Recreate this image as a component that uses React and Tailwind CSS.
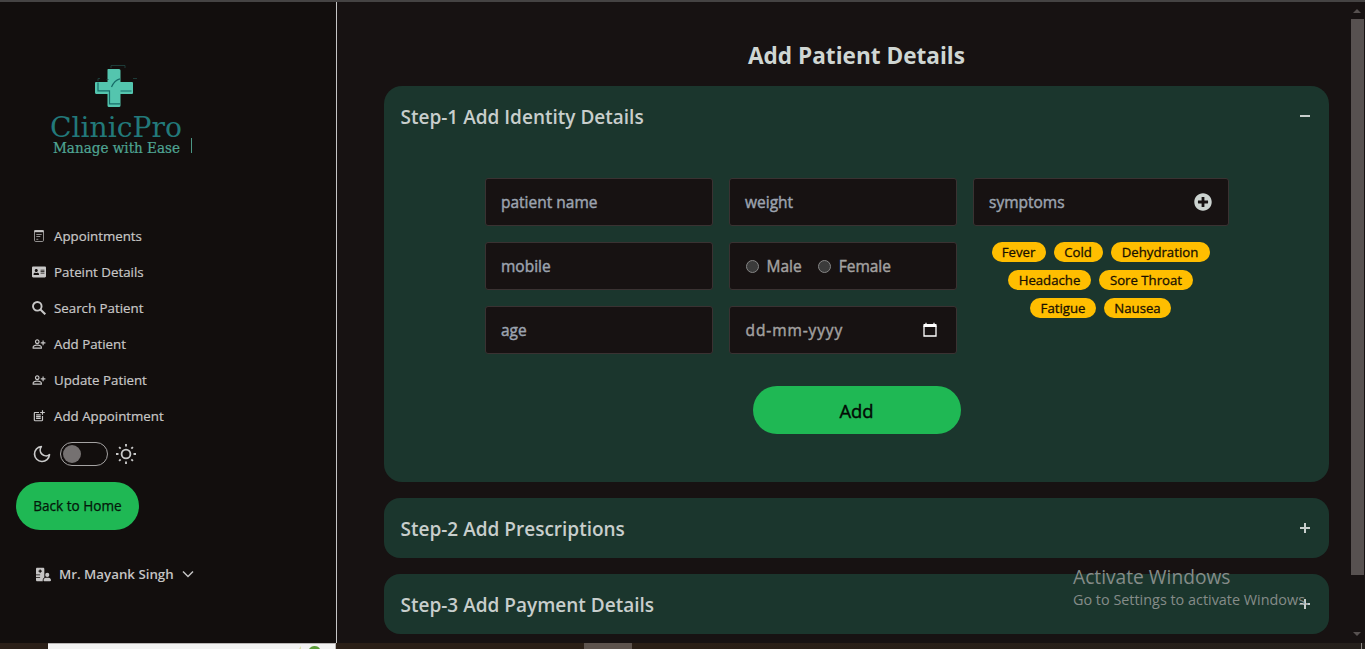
import { FaAddressCard, FaPlusCircle } from "react-icons/fa";
import { FaHospitalUser } from "react-icons/fa6";
import { MdOutlinePersonAddAlt, MdPostAdd } from "react-icons/md";

function NoteIcon() {
  return (
    <svg viewBox="0 0 14 14" className="size-[14px]" fill="none" stroke="currentColor">
      <rect x="2.500" y="1.500" width="9" height="11" rx="1.200" strokeWidth="0.700" />
      <path d="M2.300 2.200h9.400" strokeWidth="2" />
      <path d="M4.300 5.500h5.400M4.300 7.500h4M4.300 10.300h2" strokeWidth="0.700" />
    </svg>
  );
}

function SearchIcon() {
  return (
    <svg viewBox="0 0 14 14" className="size-[14px]" fill="none" stroke="currentColor" strokeWidth="1.900">
      <circle cx="5.300" cy="5.300" r="4.300" />
      <path d="M8.400 8.400l4.900 4.900" strokeWidth="2.100" />
    </svg>
  );
}

function Logo() {
  return (
    <svg viewBox="0 0 160 110" className="h-[110px] w-[160px]">
      <path
        d="M68 14h11q1.500 0 1.500 1.500V27h11.500q1 0 1 1v10q0 1-1 1H80.500v11.500q0 1.500-1.500 1.500H69q-1.500 0-1.500-1.500V39H56.500q-1.500 0-1.500-1.500V28q0-1 1-1h11.500V15q0-1 .500-1z"
        fill="#54c5ae"
      />
      <path d="M58 27.500v8.300h11.500v13h10.500M71.500 32q3-7 8.500-8.200M80.500 36h11" fill="none" stroke="#176c68" strokeWidth="1.200" />
      <path d="M71 13v-2.500h14v2.500M93 23.500h4M58 26v-2.500h2M66.500 24.500h2" fill="none" stroke="#214744" strokeWidth="0.800" />
      <text x="10" y="82" textLength="132" lengthAdjust="spacingAndGlyphs" fontSize="27" fill="#22797a" fontFamily="'DejaVu Serif Condensed', 'DejaVu Serif', serif">ClinicPro</text>
      <text x="13" y="97.500" textLength="127" lengthAdjust="spacingAndGlyphs" fontSize="14" fill="#4fa593" stroke="#4fa593" strokeWidth="0.200" fontFamily="'DejaVu Serif Condensed', 'DejaVu Serif', serif">Manage with Ease</text>
      <path d="M151.500 83v15" stroke="#4c9684" strokeWidth="1" />
    </svg>
  );
}

const links = [
  { icon: <NoteIcon />, label: "Appointments" },
  { icon: <FaAddressCard className="size-[14px]" />, label: "Pateint Details" },
  { icon: <SearchIcon />, label: "Search Patient" },
  { icon: <MdOutlinePersonAddAlt className="size-[14px]" />, label: "Add Patient" },
  { icon: <MdOutlinePersonAddAlt className="size-[14px]" />, label: "Update Patient" },
  { icon: <MdPostAdd className="size-[14px]" />, label: "Add Appointment" },
];

function Sidebar() {
  return (
    <aside className="flex w-[337px] shrink-0 flex-col border-r border-[#c6c6c6] bg-[#120e0d]">
      <div className="pt-[53px] pl-10">
        <Logo />
      </div>
      <nav className="mt-[53px] flex flex-col">
        {links.map((l) => (
          <a key={l.label} className="flex h-9 items-center pl-[30px] text-[13.3px] text-[#c8c7c7] [-webkit-text-stroke:0.2px]">
            <span className="mr-[6px] flex w-[18px] justify-center">{l.icon}</span>
            <span className="pt-[2px]">{l.label}</span>
          </a>
        ))}
      </nav>
      <div className="mt-2 flex h-6 items-center gap-2 pl-8 text-[#cacaca]">
        <svg viewBox="0 0 24 24" className="size-5" fill="none" stroke="currentColor" strokeWidth="2" strokeLinecap="round" strokeLinejoin="round">
          <path d="M21 12.790A9 9 0 1 1 11.210 3 7 7 0 0 0 21 12.790z" />
        </svg>
        <span className="flex h-6 w-12 items-center rounded-full border border-[#a5a3a3] pl-[2px]">
          <span className="size-[18px] rounded-full bg-[#757171]" />
        </span>
        <svg viewBox="0 0 24 24" className="size-5" fill="none" stroke="currentColor" strokeWidth="2.200">
          <circle cx="12" cy="12" r="5.300" />
          <path d="M12 0v3M12 21v3M3.700 3.700l1.900 1.900M18.400 18.400l1.900 1.900M0 12h3M21 12h3M3.700 20.300l1.900-1.900M18.400 5.600l1.900-1.900" />
        </svg>
      </div>
      <button className="mt-4 ml-4 h-12 w-[123px] rounded-full bg-[#1fb854] text-[13.6px] text-[#04170a] [-webkit-text-stroke:0.25px]">Back to Home</button>
      <div className="mt-[34px] flex h-5 items-center pl-9 text-[13.3px] font-semibold text-[#c5c4c4]">
        <FaHospitalUser className="mr-2 size-[15px]" />
        <span className="pt-[2px]">Mr. Mayank Singh</span>
        <svg viewBox="0 0 12 8" className="ml-2 h-2 w-3" fill="none" stroke="currentColor" strokeWidth="1.500">
          <path d="M1 1.500l5 5 5-5" />
        </svg>
      </div>
    </aside>
  );
}

const box = "flex h-12 items-center rounded-[3px] border border-[#3a3232] bg-[#171212] px-4 text-[15.5px] text-[#9ca3af] [-webkit-text-stroke:0.45px]";

function Field({ label }) {
  return (
    <div className={`${box} pl-[15.500px]`}>
      <span className="pt-[2px]">{label}</span>
    </div>
  );
}

function Radio({ label }) {
  return (
    <span className="flex items-center gap-2 text-[#a3a1a0]">
      <span className="size-[13px] rounded-full border border-[#858585] bg-[#3b3b3b]" />
      <span className="pt-[2px]">{label}</span>
    </span>
  );
}

function Step({ title, sign }) {
  return (
    <div className="flex h-[60px] items-center justify-between pr-4 pl-[16.500px] text-[19px] font-semibold text-[#c8cecc]">
      <h2 className="pt-[2px]">{title}</h2>
      <svg viewBox="0 0 12 12" className="mr-[2px] size-3" stroke="currentColor" strokeWidth="2">
        <path d={sign === "+" ? "M1 6h10M6 1v10" : "M1 6h10"} />
      </svg>
    </div>
  );
}

function Badge({ children, width }) {
  return <span className={`flex h-5 items-center justify-center rounded-full bg-[#ffbe00] pt-px text-[13.2px] text-[#191000] [-webkit-text-stroke:0.3px] ${width}`}>{children}</span>;
}

function Main() {
  return (
    <main className="relative flex min-w-0 grow flex-col overflow-hidden bg-[#171212] pr-[21px] pl-[47px]">
      <h1 className="mt-[38px] flex h-8 shrink-0 items-center justify-center text-[22.6px] font-bold text-[#cfd6d3]">Add Patient Details</h1>
      <section className="mt-[14px] h-[396px] shrink-0 rounded-[18px] bg-[#1b362d]">
        <Step title="Step-1 Add Identity Details" sign="-" />
        <div className="mx-auto mt-8 flex w-[744px] gap-4">
          <div className="flex w-[228px] flex-col gap-4">
            <Field label="patient name" />
            <Field label="mobile" />
            <Field label="age" />
          </div>
          <div className="flex w-[228px] flex-col gap-4">
            <Field label="weight" />
            <div className={`${box} gap-4`}>
              <Radio label="Male" />
              <Radio label="Female" />
            </div>
            <div className={`${box} justify-between`}>
              <span className="pt-[2px] tracking-[0.9px] text-[#a3a1a0]">dd-mm-yyyy</span>
              <svg viewBox="0 0 14 16" className="mr-[3px] h-4 w-[14px]" fill="none" stroke="#fff">
                <path d="M1 3.500v10.500h12V3.500" strokeWidth="1.300" />
                <path d="M0.500 3.500h13" strokeWidth="3" />
                <path d="M3 0.800v2M11 0.800v2" strokeWidth="1.200" />
              </svg>
            </div>
          </div>
          <div className="flex w-64 flex-col gap-2">
            <div className={`${box} mb-2 justify-between pl-[15.500px]`}>
              <span className="pt-[2px]">symptoms</span>
              <FaPlusCircle className="size-[18px] text-[#ccd3d0]" />
            </div>
            <div className="flex justify-center gap-2">
              <Badge width="w-[54px]">Fever</Badge>
              <Badge width="w-[49px]">Cold</Badge>
              <Badge width="w-[99px]">Dehydration</Badge>
            </div>
            <div className="flex justify-center gap-2">
              <Badge width="w-[83px]">Headache</Badge>
              <Badge width="w-[94px]">Sore Throat</Badge>
            </div>
            <div className="flex justify-center gap-2">
              <Badge width="w-[66px]">Fatigue</Badge>
              <Badge width="w-[67px]">Nausea</Badge>
            </div>
          </div>
        </div>
        <button className="mx-auto mt-8 block h-12 w-52 rounded-full bg-[#1fb854] pt-[2px] text-[18.4px] text-[#020a04] [-webkit-text-stroke:0.4px]">Add</button>
      </section>
      <section className="mt-4 shrink-0 rounded-2xl bg-[#1b362d]">
        <Step title="Step-2 Add Prescriptions" sign="+" />
      </section>
      <section className="mt-4 shrink-0 rounded-2xl bg-[#1b362d]">
        <Step title="Step-3 Add Payment Details" sign="+" />
      </section>
      <div className="absolute top-[562px] left-[736px] whitespace-nowrap text-[#858c89]">
        <p className="text-[19.2px] leading-[26px]">Activate Windows</p>
        <p className="text-[14.4px] leading-5">Go to Settings to activate Windows.</p>
      </div>
    </main>
  );
}

function Scrollbar() {
  return (
    <div className="flex w-[15px] shrink-0 flex-col items-center bg-[#171212] pr-px text-[#575150]">
      <svg viewBox="0 0 8 4" className="mt-[7px] h-1 w-2" fill="currentColor"><path d="M0 4l4-4 4 4z" /></svg>
      <div className="mt-[6px] h-[556px] w-[13px] bg-[#575150]" />
      <svg viewBox="0 0 8 4" className="mt-[57px] h-1 w-2" fill="currentColor"><path d="M0 0l4 4 4-4z" /></svg>
    </div>
  );
}

function Taskbar() {
  return (
    <div className="flex h-[6px] bg-linear-to-r from-[#2a1f18] via-[#2a1f16] to-[#25201c]">
      <div className="ml-12 flex w-[288px] justify-end border-t border-r border-[#b9b6b5] bg-[#f2f2f2]">
        <svg viewBox="0 0 30 5" className="mr-[10px] h-[5px] w-[30px]">
          <path d="M4 5l2-3v3z" fill="#dce5a9" />
          <path d="M14 5q2-3 5.500-3 4 0 5.500 3z" fill="#5a9b38" />
        </svg>
      </div>
      <div className="ml-[248px] w-12 bg-[#5d534d]" />
      <div className="ml-auto w-1 border-l border-[#8a8784]" />
    </div>
  );
}

export default function App() {
  return (
    <div className="flex h-[649px] w-[1365px] flex-col overflow-hidden bg-[#171212] font-['Open_Sans',sans-serif]">
      <div className="h-[2px] shrink-0 bg-[#454343]" />
      <div className="flex h-[641px] shrink-0">
        <Sidebar />
        <Main />
        <Scrollbar />
      </div>
      <Taskbar />
    </div>
  );
}
